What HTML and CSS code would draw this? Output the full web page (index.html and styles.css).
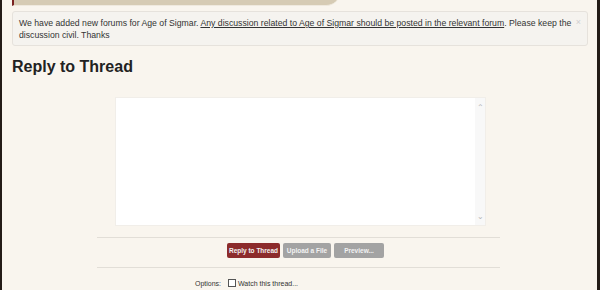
FILE: index.html
```html
<!DOCTYPE html>
<html>
<head>
  <title>Reply to Thread</title>
  <link rel="stylesheet" href="styles.css">
</head>

<body>
  <div class="page">
    <div class="breadcrumb">
      <span class="crumb">Home</span>
      <span class="crumb">Forums</span>
      <span class="crumb">Warhammer</span>
      <span class="crumb">Warhammer: Age of Sigmar Community</span>
      <span class="crumb">Warhammer Lineage</span>
      <span class="crumb last">Rumor Buster</span>
    </div>

    <div class="notice">
      <span class="notice-close">×</span>
      We have added new forums for Age of Sigmar. <a href="#">Any discussion related to Age of Sigmar should be posted in the relevant forum</a>. Please keep the discussion civil. Thanks
    </div>

    <h1>Reply to Thread</h1>

    <form class="reply-form">
      <div class="editor">
        <div class="editor-body"></div>
        <div class="editor-scroll">
          <span class="chev">&#8963;</span>
          <span class="chev">&#8964;</span>
        </div>
      </div>

      <div class="form-line line-top"></div>

      <div class="buttons">
        <button class="btn btn-primary" type="button">Reply to Thread</button>
        <button class="btn" type="button">Upload a File</button>
        <button class="btn btn-wide" type="button">Preview...</button>
      </div>

      <div class="form-line"></div>

      <div class="options">
        <span class="options-label">Options:</span>
        <label class="watch"><span class="checkbox"></span>Watch this thread...</label>
      </div>
    </form>
  </div>
</body>
</html>
```

FILE: styles.css
```css
html, body {
  height: 100%;
}

body {
  font-family: 'Liberation Sans', Arial, sans-serif;
  background-color: #241c17;
  margin: 0;
  padding: 0;
  overflow: hidden;
}

.page {
  display: flow-root;
  background-color: #f9f5ee;
  margin: 0 3px 0 2px;
  padding: 0 9px 0 10px;
  min-height: 100%;
}

/* breadcrumb, mostly scrolled out of view */
.breadcrumb {
  display: flex;
  height: 20px;
  margin-top: -15px;
  border-left: 2px solid #7a2222;
  width: 326px;
  background-color: #d6cbb4;
  border-bottom: 1px solid #efe9de;
  border-radius: 0 0 14px 0;
}

.crumb {
  font-size: 8px;
  color: #6b5f4d;
  line-height: 16px;
  padding: 0 9px;
  white-space: nowrap;
}

.notice {
  position: relative;
  margin-top: 5px;
  background-color: #f5f3ef;
  border: 1px solid #e6e2dc;
  border-radius: 3px;
  padding: 5px 14px 4px 6px;
  font-size: 8.7px;
  line-height: 12px;
  color: #333;
}

.notice a {
  color: #333;
  text-decoration: underline;
}

.notice-close {
  position: absolute;
  top: 4px;
  right: 6px;
  font-size: 9px;
  color: #cfcfcf;
}

h1 {
  font-size: 16px;
  color: #222;
  margin: 11px 0 0;
  line-height: 20px;
}

.reply-form {
  margin-top: 20px;
}

.editor {
  display: flex;
  width: 371px;
  height: 129px;
  margin-left: 103px;
  background-color: #fff;
  border: 1px solid #f1eee9;
  box-sizing: border-box;
}

.editor-body {
  flex: 1;
}

.editor-scroll {
  width: 10px;
  background-color: #f8f8f8;
  display: flex;
  flex-direction: column;
  justify-content: space-between;
  align-items: center;
  padding: 6px 0 4px;
}

.chev {
  font-size: 8px;
  line-height: 8px;
  color: #b5b5b5;
}

.form-line {
  width: 403px;
  margin-left: 85px;
  border-top: 1px solid #e2ded7;
}

.line-top {
  margin-top: 11px;
}

.buttons {
  display: flex;
  gap: 3px;
  margin: 5px 0 9px 215px;
}

.btn {
  font-family: 'Liberation Sans', Arial, sans-serif;
  font-size: 6.5px;
  font-weight: bold;
  color: #f2f2f2;
  background-color: #a3a3a3;
  border: none;
  border-radius: 2px;
  height: 15px;
  width: 48px;
  padding: 0;
  cursor: pointer;
}

.btn-wide {
  width: 50px;
}

.btn-primary {
  background-color: #8c2b2b;
  width: 53px;
}

.options {
  display: flex;
  align-items: center;
  margin: 11px 0 0 183px;
  font-size: 7px;
  color: #333;
}

.options-label {
  width: 33px;
}

.watch {
  display: flex;
  align-items: center;
}

.checkbox {
  width: 6px;
  height: 6px;
  border: 1px solid #555;
  background-color: #fff;
  margin-right: 2px;
}
```
